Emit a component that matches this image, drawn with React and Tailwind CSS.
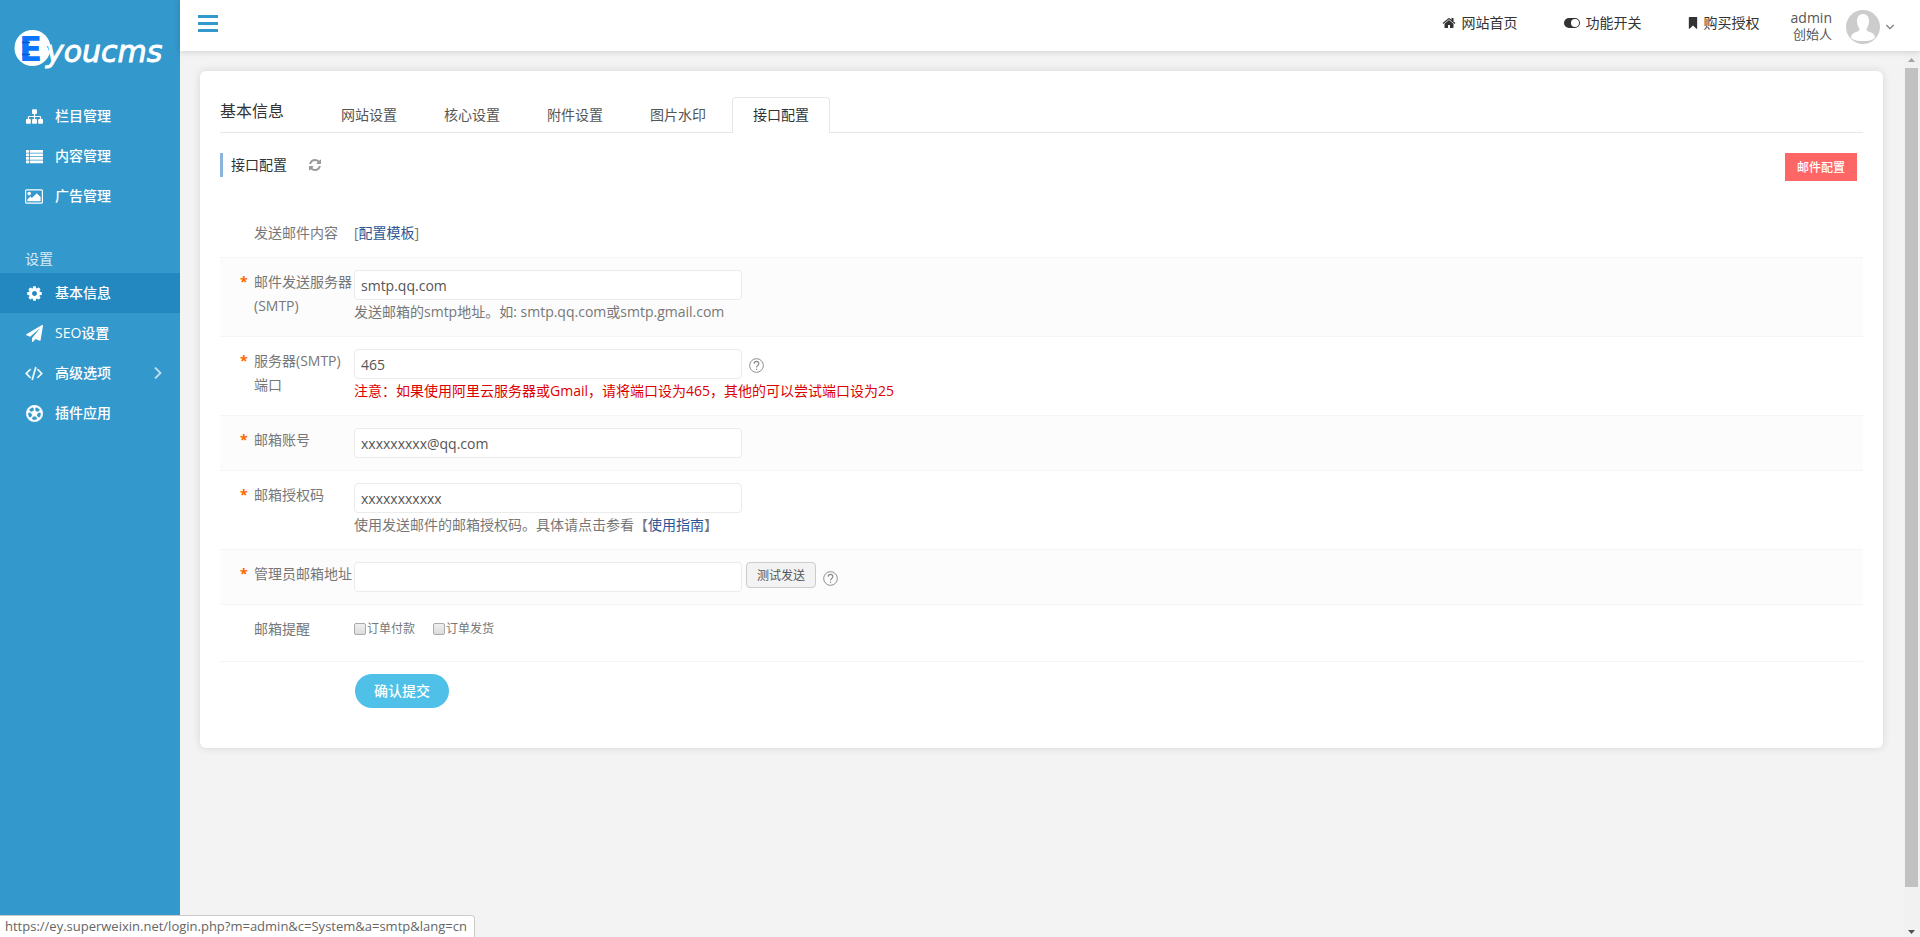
import { FaRegFutbol } from "react-icons/fa";

const Icon = ({ d, box = "0 0 1792 1792", className = "" }) => (
  <svg viewBox={box} className={`shrink-0 fill-current ${className}`} aria-hidden="true">
    <path fillRule="evenodd" d={d} />
  </svg>
);

const icons = {
  sitemap:
    "M1792 1248v320q0 40-28 68t-68 28h-320q-40 0-68-28t-28-68v-320q0-40 28-68t68-28h96v-192h-512v192h96q40 0 68 28t28 68v320q0 40-28 68t-68 28h-320q-40 0-68-28t-28-68v-320q0-40 28-68t68-28h96v-192h-512v192h96q40 0 68 28t28 68v320q0 40-28 68t-68 28h-320q-40 0-68-28t-28-68v-320q0-40 28-68t68-28h96v-192q0-52 38-90t90-38h512v-192h-96q-40 0-68-28t-28-68v-320q0-40 28-68t68-28h320q40 0 68 28t28 68v320q0 40-28 68t-68 28h-96v192h512q52 0 90 38t38 90v192h96q40 0 68 28t28 68z",
  list: "M0 200h310v290H0zM400 200h1392v290H400zM0 570h310v290H0zM400 570h1392v290H400zM0 940h310v290H0zM400 940h1392v290H400zM0 1310h310v290H0zM400 1310h1392v290H400z",
  picture:
    "M576 576q0 80-56 136t-136 56-136-56-56-136 56-136 136-56 136 56 56 136zm1024 384v448h-1408v-192l320-320 160 160 512-512zm96-704h-1600q-13 0-22.5 9.5t-9.5 22.5v1216q0 13 9.5 22.5t22.5 9.5h1600q13 0 22.5-9.5t9.5-22.5v-1216q0-13-9.5-22.5t-22.5-9.5zm160 32v1216q0 66-47 113t-113 47h-1600q-66 0-113-47t-47-113v-1216q0-66 47-113t113-47h1600q66 0 113 47t47 113z",
  cog: "M1152 896q0-106-75-181t-181-75-181 75-75 181 75 181 181 75 181-75 75-181zm512-109v222q0 12-8 23t-20 13l-185 28q-19 54-39 91 35 50 107 138 10 12 10 25t-9 23q-27 37-99 108t-94 71q-12 0-26-9l-138-108q-44 23-91 38-16 136-29 186-7 28-36 28h-222q-14 0-24.5-8.5t-11.5-21.5l-28-184q-49-16-90-37l-141 107q-10 9-25 9-14 0-25-11-126-114-165-168-7-10-7-23 0-12 8-23 15-21 51-66.5t54-70.5q-27-50-41-99l-183-27q-13-2-21-12.5t-8-23.5v-222q0-12 8-23t19-13l186-28q14-46 39-92-40-57-107-138-10-12-10-24 0-10 9-23 26-36 98.5-107.5t94.5-71.5q13 0 26 10l138 107q44-23 91-38 16-136 29-186 7-28 36-28h222q14 0 24.5 8.5t11.5 21.5l28 184q49 16 90 37l142-107q9-9 24-9 13 0 25 10 129 119 165 170 7 8 7 22 0 12-8 23-15 21-51 66.5t-54 70.5q26 50 41 98l183 28q13 2 21 12.5t8 23.5z",
  plane:
    "M1764 11q33 24 27 64l-256 1536q-5 29-32 45-14 8-31 8-11 0-24-5l-453-185-242 295q-18 23-49 23-13 0-22-4-19-7-30.5-23.5t-11.5-36.5v-349l864-1059-1069 925-395-162q-37-14-40-55-2-40 32-59l1664-960q15-9 32-9 20 0 36 11z",
  code: "M617 1399l-50 50q-10 10-23 10t-23-10l-466-466q-10-10-10-23t10-23l466-466q10-10 23-10t23 10l50 50q10 10 10 23t-10 23l-393 393 393 393q10 10 10 23t-10 23zm591-1067l-373 1291q-4 13-15.5 19.5t-23.5 2.5l-62-17q-13-4-19.5-15.5t-2.5-24.5l373-1291q4-13 15.5-19.5t23.5-2.5l62 17q13 4 19.5 15.5t2.5 24.5zm657 651l-466 466q-10 10-23 10t-23-10l-50-50q-10-10-10-23t10-23l393-393-393-393q-10-10-10-23t10-23l50-50q10-10 23-10t23 10l466 466q10 10 10 23t-10 23z",
  home: "M1472 992v480q0 26-19 45t-45 19h-384v-384h-256v384h-384q-26 0-45-19t-19-45v-480q0-1 .5-3t.5-3l575-474 575 474q1 2 1 6zm223-69l-62 74q-8 9-21 11h-3q-13 0-21-7l-692-577-692 577q-12 8-24 7-13-2-21-11l-62-74q-8-10-7-23.5t11-21.5l719-599q32-26 76-26t76 26l244 204v-195q0-14 9-23t23-9h192q14 0 23 9t9 23v408l219 182q10 8 11 21.5t-7 23.5z",
  toggle:
    "M640 256h768a640 640 0 0 1 0 1280H640a640 640 0 0 1 0-1280zM1408 384a512 512 0 1 0 0 1024a512 512 0 1 0 0-1024z",
  bookmark: "M164 0h1052q64 10 64 100v1483q-20 90-110 70L690 1190l-480 463q-90 20-110-70V100q0-90 64-100z",
  refresh:
    "M1639 1056q0 5-1 7-64 268-268 434.5t-478 166.5q-146 0-282.5-55t-243.5-157l-129 129q-19 19-45 19t-45-19-19-45v-448q0-26 19-45t45-19h448q26 0 45 19t19 45-19 45l-137 137q71 66 161 102t187 36q134 0 250-65t186-179q11-17 53-117 8-23 30-23h192q13 0 22.5 9.5t9.5 22.5zm25-800v448q0 26-19 45t-45 19h-448q-26 0-45-19t-19-45 19-45l138-138q-148-137-349-137-134 0-250 65t-186 179q-11 17-53 117-8 23-30 23h-199q-13 0-22.5-9.5t-9.5-22.5v-7q65-268 270-434.5t480-166.5q146 0 284 55.5t245 156.5l130-129q19-19 45-19t45 19 19 45z",
};

const contentMenu = [
  { label: "栏目管理", icon: <Icon d={icons.sitemap} className="size-[17px]" /> },
  { label: "内容管理", icon: <Icon d={icons.list} className="size-[17px]" /> },
  { label: "广告管理", icon: <Icon d={icons.picture} box="-64 0 1920 1792" className="h-[17px] w-[18px]" /> },
];

const settingsMenu = [
  { label: "基本信息", icon: <Icon d={icons.cog} className="size-[17px]" />, active: true },
  { label: "SEO设置", icon: <Icon d={icons.plane} className="size-[17px]" /> },
  { label: "高级选项", icon: <Icon d={icons.code} box="0 64 1920 1792" className="h-[17px] w-[18px] stroke-current stroke-[50]" />, more: true },
  { label: "插件应用", icon: <FaRegFutbol className="size-[17px]" stroke="currentColor" strokeWidth="16" /> },
];

const tabs = ["网站设置", "核心设置", "附件设置", "图片水印", "接口配置"];

const Chevron = ({ className }) => (
  <svg viewBox="0 0 12 12" className={`fill-none stroke-current ${className}`} aria-hidden="true">
    <path d="M3 0.5 L8.5 6 L3 11.5" strokeWidth="1.8" />
  </svg>
);

const Logo = () => (
  <svg viewBox="0 0 150 40" className="h-10 w-[150px]" role="img" aria-label="Eyoucms">
    <circle cx="18.5" cy="18" r="18" fill="#fff" />
    <text x="5" y="31" fontFamily="DejaVu Sans" fontWeight="bold" fontSize="34" fill="#0a74ff">E</text>
    <path d="M8 12.500h8M8 24.500h8" stroke="#0a4fc4" strokeWidth="1.500" />
    <path d="M34 16l2 5" stroke="#0a74ff" strokeWidth="2" />
    <text x="32" y="32" fontFamily="DejaVu Sans" fontStyle="italic" fontSize="30" fill="#fff" stroke="#fff" strokeWidth="0.900">youcms</text>
  </svg>
);

const MenuItem = ({ item }) => (
  <a href="#" className={`flex h-10 items-center pr-4 pl-[25px] text-sm text-white ${item.active ? "bg-[#2288bf]" : ""}`}>
    <span className="flex w-[18px] justify-center">{item.icon}</span>
    <span className="ml-3 grow font-medium">{item.label}</span>
    {item.more && <Chevron className="size-3 opacity-70" />}
  </a>
);

const Sidebar = () => (
  <aside className="w-[180px] shrink-0 bg-[#3398cc]">
    <a href="#" className="block pt-[30px] pl-[14px]">
      <Logo />
    </a>
    <nav className="mt-[26px]">
      {contentMenu.map((item) => (
        <MenuItem key={item.label} item={item} />
      ))}
      <p className="mt-[29px] flex h-7 items-center pl-[25px] text-sm text-white/80">设置</p>
      {settingsMenu.map((item) => (
        <MenuItem key={item.label} item={item} />
      ))}
    </nav>
  </aside>
);

const Header = () => (
  <header className="z-10 flex h-[51px] shrink-0 justify-between bg-white pr-[26px] pl-[18px] shadow-[0_1px_6px_rgba(0,0,0,0.15)]">
    <button type="button" aria-label="菜单" className="mt-[15px] flex h-[17px] w-5 flex-col justify-between">
      <span className="h-[3px] w-full bg-[#3398cc]" />
      <span className="h-[3px] w-full bg-[#3398cc]" />
      <span className="h-[3px] w-full bg-[#3398cc]" />
    </button>
    <div className="flex text-sm text-[#333]">
      <nav className="flex h-[46px] items-center gap-[46px]">
        <a href="#" className="flex items-center gap-[6px]">
          <Icon d={icons.home} className="size-[14px]" />
          网站首页
        </a>
        <a href="#" className="flex items-center gap-[6px]">
          <Icon d={icons.toggle} box="0 0 2048 1792" className="h-[14px] w-4" />
          功能开关
        </a>
        <a href="#" className="flex items-center gap-[6px]">
          <Icon d={icons.bookmark} box="40 0 1300 1700" className="h-3 w-[10px]" />
          购买授权
        </a>
      </nav>
      <button type="button" className="ml-[31px] flex h-[52px] items-center">
        <span className="flex flex-col items-end text-[#555]">
          <span className="text-sm leading-4">admin</span>
          <span className="text-[13px] leading-4">创始人</span>
        </span>
        <svg viewBox="0 0 34 34" className="mt-[2px] ml-[14px] size-[34px]" aria-hidden="true">
          <circle cx="17" cy="17" r="17" fill="#ccc" />
          <path
            fill="#fff"
            d="M17 4c4 0 6 3 6 7 0 3-1 5.500-2.500 7.500 0 2 .5 2.500 3.500 3.500 3.500 1 5 3 5 6-3 2.500-7 3-12 3s-9-.5-12-3c0-3 1.500-5 5-6 3-1 3.500-1.500 3.500-3.500C12 16.500 11 14 11 11c0-4 2-7 6-7z"
          />
        </svg>
        <Chevron className="mt-[2px] ml-[6px] size-2 rotate-90 text-[#777]" />
      </button>
    </div>
  </header>
);

const Row = ({ label, id, required, shaded, children }) => (
  <div className={`flex border-t border-[#f5f5f5] py-3 pl-5 leading-6 first:border-t-0 ${shaded ? "bg-[#fcfcfc]" : ""}`}>
    <div className="flex w-[114px] shrink-0">
      <span className="w-[14px] shrink-0 font-bold text-[#f60]">{required ? "*" : ""}</span>
      {id ? <label htmlFor={id} className="w-[100px]">{label}</label> : <span className="w-[100px]">{label}</span>}
    </div>
    <div>{children}</div>
  </div>
);

const TextInput = (props) => (
  <input
    type="text"
    className="block h-[30px] w-[388px] rounded-sm border border-[#ebebeb] bg-white px-[6px] text-sm text-[#555] outline-none"
    {...props}
  />
);

const Help = () => (
  <button type="button" aria-label="帮助" className="mt-[9px] ml-[7px] size-[15px] text-[#888]">
    <svg viewBox="0 0 16 16" className="size-full fill-none stroke-current" aria-hidden="true">
      <circle cx="8" cy="8" r="7.300" />
      <path d="M5.500 6.200C5.500 2.800 10.500 2.800 10.500 6.200C10.500 8 8 8 8 10.200M8 11.500v1.300" strokeWidth="1.200" />
    </svg>
  </button>
);

const Remind = ({ label }) => (
  <label className="flex items-center">
    <input
      type="checkbox"
      className="mr-px size-3 appearance-none rounded-xs border border-[#aaa] bg-gradient-to-b from-[#f0f0f0] to-[#dcdcdc]"
    />
    {label}
  </label>
);

const SmtpForm = () => (
  <form className="mt-[28px] text-sm text-[#777]" onSubmit={(e) => e.preventDefault()}>
    <Row label="发送邮件内容">
      [<a href="#" className="text-[#2b5695]">配置模板</a>]
    </Row>
    <Row label="邮件发送服务器(SMTP)" id="server" required shaded>
      <TextInput id="server" defaultValue="smtp.qq.com" />
      <p>发送邮箱的smtp地址。如: smtp.qq.com或smtp.gmail.com</p>
    </Row>
    <Row label="服务器(SMTP)端口" id="port" required>
      <div className="flex">
        <TextInput id="port" defaultValue="465" />
        <Help />
      </div>
      <p className="text-[#d00]">注意：如果使用阿里云服务器或Gmail，请将端口设为465，其他的可以尝试端口设为25</p>
    </Row>
    <Row label="邮箱账号" id="account" required shaded>
      <TextInput id="account" defaultValue="xxxxxxxxx@qq.com" />
    </Row>
    <Row label="邮箱授权码" id="code" required>
      <TextInput id="code" defaultValue="xxxxxxxxxxx" />
      <p>
        使用发送邮件的邮箱授权码。具体请点击参看【<a href="#" className="text-[#2b5695]">使用指南</a>】
      </p>
    </Row>
    <Row label="管理员邮箱地址" id="admin-mail" required shaded>
      <div className="flex">
        <TextInput id="admin-mail" />
        <button type="button" className="ml-1 h-[26px] rounded-sm border border-[#ccc] bg-[#f3f3f3] px-[10px] pt-px text-xs text-[#555]">
          测试发送
        </button>
        <Help />
      </div>
    </Row>
    <Row label="邮箱提醒">
      <div className="flex h-8 items-start gap-[18px] text-xs leading-6">
        <Remind label="订单付款" />
        <Remind label="订单发货" />
      </div>
    </Row>
    <Row label="">
      <button type="submit" className="ml-px h-[34px] rounded-full bg-[#4fc0e8] px-[19px] text-sm font-medium text-white">
        确认提交
      </button>
    </Row>
  </form>
);

const Scrollbar = () => (
  <div className="flex w-4 shrink-0 flex-col bg-[#f1f1f1]" aria-hidden="true">
    <svg viewBox="0 0 16 17" className="h-[17px] w-4">
      <path d="M4 11h7L7.500 7z" fill="#a3a3a3" />
    </svg>
    <div className="ml-px w-[13px] grow-[819] bg-[#c1c1c1]" />
    <div className="grow-[33]" />
    <svg viewBox="0 0 16 17" className="h-[17px] w-4">
      <path d="M4 10h7L7.500 14z" fill="#505050" />
    </svg>
  </div>
);

const App = () => (
  <div className="flex h-screen overflow-hidden bg-[#f3f3f3] font-['Open_Sans','Noto_Sans_CJK_SC',sans-serif]">
    <Sidebar />
    <div className="flex min-w-0 grow flex-col">
      <Header />
      <div className="flex min-h-0 grow">
        <main className="min-w-0 grow py-5 pr-[21px] pl-5">
          <section className="rounded-md bg-white px-5 pt-[26px] pb-[28px] shadow-[0_0_8px_rgba(0,0,0,0.12)]">
            <div className="flex h-[36px] border-b border-[#e6e6e6]">
              <h1 className="w-[100px] text-base leading-[29px] text-[#333]">基本信息</h1>
              <nav className="flex gap-[5px]">
                {tabs.map((tab, i) => (
                  <a
                    key={tab}
                    href="#"
                    className={`h-[36px] border border-b-0 px-5 text-sm leading-[34px] ${
                      i === 4 ? "rounded-t-sm border-[#e6e6e6] bg-white text-[#333]" : "border-transparent text-[#555]"
                    }`}
                  >
                    {tab}
                  </a>
                ))}
              </nav>
            </div>
            <div className="mt-5 flex items-start justify-between pr-[6px]">
              <div className="flex h-6 items-center border-l-[3px] border-[#8ab4de] pl-2">
                <h2 className="text-sm text-[#333]">接口配置</h2>
                <button type="button" aria-label="刷新" className="ml-[21px] text-[#999]">
                  <Icon d={icons.refresh} className="size-[14px]" />
                </button>
              </div>
              <button type="button" className="h-7 bg-[#f66] px-3 pt-px text-xs font-medium text-white">
                邮件配置
              </button>
            </div>
            <SmtpForm />
          </section>
        </main>
        <Scrollbar />
      </div>
    </div>
    <div className="fixed bottom-0 left-0 z-20 h-[22px] rounded-tr border-t border-r border-[#ccc] bg-white pr-[7px] pl-[5px] text-[13px] leading-5 text-[#666]">
      https://ey.superweixin.net/login.php?m=admin&amp;c=System&amp;a=smtp&amp;lang=cn
    </div>
  </div>
);

export default App;
